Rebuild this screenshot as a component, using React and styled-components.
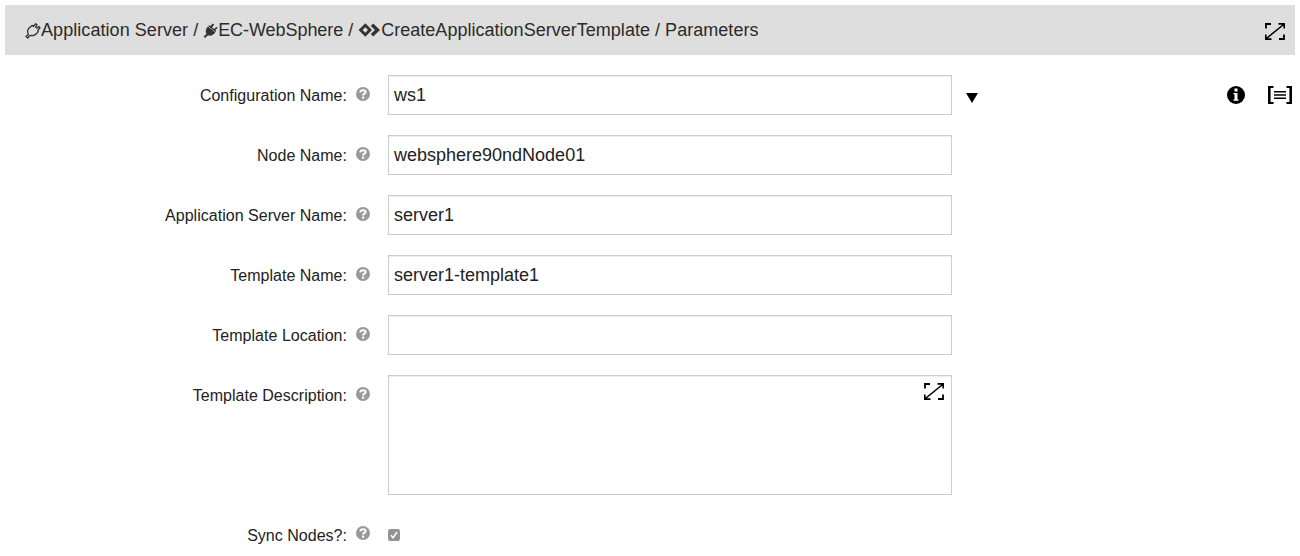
import React from "react";
import styled, { createGlobalStyle } from "styled-components";

const GlobalStyle = createGlobalStyle`
  *, *::before, *::after { box-sizing: border-box; }
  body {
    margin: 0;
    background: #fff;
    color: #222;
    font-family: "Liberation Sans", Arial, sans-serif;
    overflow: hidden;
  }
`;

const Page = styled.main`
  padding: 5px 5px 0;
  height: 556px;
  overflow: hidden;
`;

const Header = styled.header`
  display: flex;
  align-items: center;
  justify-content: space-between;
  height: 50px;
  padding: 0 10px 0 20px;
  background: #dedede;
  font-size: 18px;
  line-height: 50px;
  color: #2b2b2b;
`;

const Breadcrumb = styled.nav`
  display: flex;
  align-items: center;
  white-space: pre;
`;

const Crumb = styled.span`
  display: flex;
  align-items: center;
  letter-spacing: ${(p) => p.$tracking || 0}px;
`;

const HeaderTool = styled.span`
  padding-top: 2px;
`;

const Icon = styled.svg`
  display: block;
  flex: none;
  width: ${(p) => p.$w}px;
  height: ${(p) => p.$h}px;
  overflow: visible;
`;

const Form = styled.form`
  display: flex;
  flex-direction: column;
  gap: 20px;
  padding-top: 20px;
`;

const Row = styled.div`
  display: flex;
  align-items: flex-start;
`;

const Label = styled.label`
  width: 342px;
  text-align: right;
  font-size: 16px;
  line-height: 42px;
  height: 40px;
  letter-spacing: 0.02px;
  white-space: nowrap;
`;

const Help = styled.span`
  display: flex;
  width: 41px;
  padding: ${(p) => (p.$raised ? 11 : 12)}px 0 0 9px;
`;

const Input = styled.input`
  width: 564px;
  height: 40px;
  margin: 0;
  padding: 0 5px;
  border: 1px solid #ccc;
  border-radius: 0;
  box-shadow: inset 0 1px 1px rgba(0, 0, 0, 0.075);
  background: #fff;
  color: #222;
  font: 18px "Liberation Sans", Arial, sans-serif;
  outline: none;
`;

const Area = styled.div`
  position: relative;
  width: 564px;
  height: 120px;
`;

const TextArea = styled.textarea`
  display: block;
  width: 100%;
  height: 100%;
  padding: 5px;
  border: 1px solid #ccc;
  box-shadow: inset 0 1px 1px rgba(0, 0, 0, 0.075);
  font: 18px "Liberation Sans", Arial, sans-serif;
  resize: none;
`;

const AreaExpand = styled.span`
  position: absolute;
  top: 8px;
  right: 8px;
`;

const Caret = styled.span`
  margin: 18px 0 0 14px;
`;

const RowTools = styled.div`
  display: flex;
  align-items: center;
  gap: 23px;
  height: 40px;
  margin-left: auto;
  padding-right: 3px;
`;

const Check = styled.span`
  margin-top: 14px;
`;

const PlugOutline = () => (
  <Icon $w={16} $h={18} viewBox="0 0 16 18" fill="none" stroke="#333" strokeWidth="1.3" strokeLinejoin="round" strokeLinecap="round">
    <path d="M3.4 13.4 C2 10.8 2.8 7.8 5.2 6 L7.4 4.4 L8.6 5.4 L10.6 2.7 L12 3.8 L10.6 6 L11.9 7 L14 5.6 L15 7 L12.9 9 L13.2 10.4 C11.7 13 8.8 15 6.2 14.4 L4.4 14.8 L2.8 17 L1 15.6 Z" />
  </Icon>
);

const PlugSolid = () => (
  <Icon $w={15} $h={18} viewBox="0 0 15 18" fill="#333">
    <path d="M5 5.4 L12.3 11.6 C10.5 14.4 7.4 15.3 5 14.3 L2 17 L.6 15.6 L3.4 12.9 C2.2 10.4 2.8 7.3 5 5.4 Z M6.1 4.2 L7.3 5.1 L9.8 2.4 L11.2 3.4 L9 6.4 L11.1 8 L13.5 5.8 L14.6 7 L12.2 9.1 L13.2 10 L12.4 10.9 L5.2 5.1 Z" />
  </Icon>
);

const Procedure = () => (
  <Icon $w={23} $h={14} viewBox="0 0 23 14" fill="#333">
    <path fillRule="evenodd" d="M7.3 .3 L14 7 L7.3 13.7 L.6 7 Z M7.3 4.3 L4.6 7 L7.3 9.7 L10 7 Z" />
    <path d="M12.8 2.9 L15.2 .5 L22 7 L15.2 13.5 L12.8 11.1 L17 7 Z" />
  </Icon>
);

const Expand = () => (
  <Icon $w={20} $h={17} viewBox="0 0 20 17">
    <g fill="none" stroke="#000">
      <path strokeWidth="1.8" d="M1 5.5 V1 H6 M14 16 H19 V11.5" />
      <path strokeWidth="1.6" d="M2 15 L18 2" />
    </g>
    <path d="M13.5 0 H20 V5.5 H18.4 V3.2 L16.8 1.8 H13.5 Z M0 11.5 H1.6 V13.8 L3.2 15.2 H6.5 V17 H0 Z" />
  </Icon>
);

const Info = () => (
  <Icon $w={18} $h={18} viewBox="0 0 18 18">
    <circle cx="9" cy="9" r="9" />
    <path fill="#fff" d="M7.5 2.6 H10.5 V5.4 H7.5 Z M6.4 7 H10.5 V13.6 H11.6 V14.8 H6.4 V13.6 H7.5 V8.2 H6.4 Z" />
  </Icon>
);

const Brackets = () => (
  <Icon $w={24} $h={18} viewBox="0 0 24 18" fill="none" stroke="#000">
    <path strokeWidth="2.6" d="M1.3 0 V18 M22.7 0 V18" />
    <path strokeWidth="2" d="M1 1 H5.5 M1 17 H5.5 M18.5 1 H23 M18.5 17 H23" />
    <path strokeWidth="1.6" d="M6 5.7 H18 M6 9 H18 M6 12.3 H18" />
  </Icon>
);

const HelpIcon = () => (
  <Icon $w={14} $h={14} viewBox="0 0 14 14">
    <circle cx="7" cy="7" r="7" fill="#999" />
    <path d="M4.3 5.4 C4.5 2.5 9.7 2.5 9.7 5 C9.7 6.7 7.1 6.6 7.1 8.6" fill="none" stroke="#fff" strokeWidth="2" />
    <path d="M6 9.6 H8.2 V11.7 H6 Z" fill="#fff" />
  </Icon>
);

const Checked = () => (
  <Icon $w={12} $h={12} viewBox="0 0 12 12" role="checkbox" aria-checked="true">
    <rect width="12" height="12" rx="2.2" fill="#939395" />
    <path d="M3 6.3 L5.1 8.8 L9 3" fill="none" stroke="#fff" strokeWidth="1.5" />
  </Icon>
);

const Field = ({ label, raised, children }) => (
  <Row>
    <Label>{label}</Label>
    <Help $raised={raised}><HelpIcon /></Help>
    {children}
  </Row>
);

export default function App() {
  return (
    <Page>
      <GlobalStyle />
      <Header>
        <Breadcrumb>
          <Crumb $tracking={0.06}><PlugOutline />Application Server</Crumb>
          <span> / </span>
          <Crumb $tracking={-0.06}><PlugSolid />EC-WebSphere</Crumb>
          <span> / </span>
          <Crumb $tracking={0.02}><Procedure />CreateApplicationServerTemplate</Crumb>
          <Crumb $tracking={0.04}> / Parameters</Crumb>
        </Breadcrumb>
        <HeaderTool><Expand /></HeaderTool>
      </Header>
      <Form>
        <Field label="Configuration Name:">
          <Input defaultValue="ws1" />
          <Caret>
            <Icon $w={12} $h={10} viewBox="0 0 12 10"><path d="M0 0 H12 L6 10 Z" /></Icon>
          </Caret>
          <RowTools>
            <Info />
            <Brackets />
          </RowTools>
        </Field>
        <Field label="Node Name:"><Input defaultValue="websphere90ndNode01" /></Field>
        <Field label="Application Server Name:"><Input defaultValue="server1" /></Field>
        <Field label="Template Name:"><Input defaultValue="server1-template1" /></Field>
        <Field label="Template Location:"><Input /></Field>
        <Field label="Template Description:">
          <Area>
            <TextArea />
            <AreaExpand><Expand /></AreaExpand>
          </Area>
        </Field>
        <Field label="Sync Nodes?:" raised><Check><Checked /></Check></Field>
      </Form>
    </Page>
  );
}
